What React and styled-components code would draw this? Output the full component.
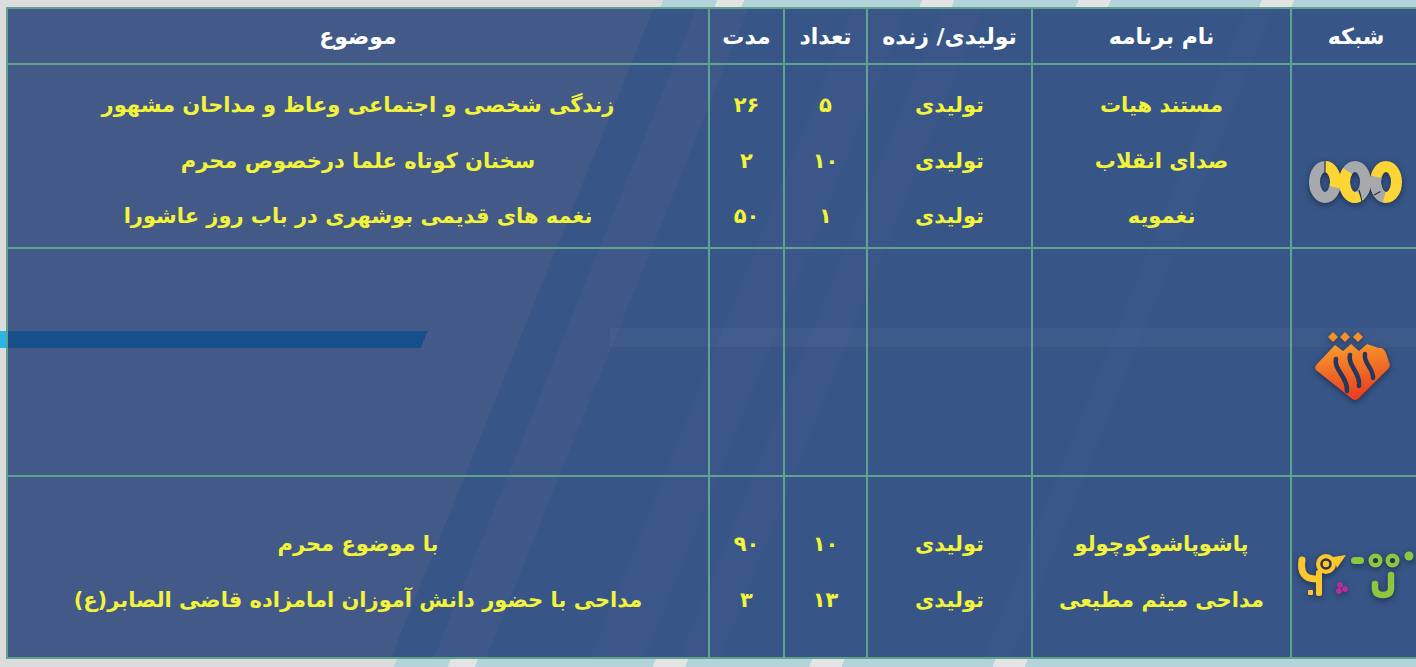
import React from "react";
import styled, { createGlobalStyle } from "styled-components";

const GlobalStyle = createGlobalStyle`
  html, body { margin: 0; padding: 0; overflow: hidden; }
  body { width: 1416px; height: 667px; }
`;

const FONT = `"DejaVu Sans", "Noto Sans", sans-serif`;
const BORDER = "#5fa28e";

const Stage = styled.div`
  width: 1416px;
  height: 667px;
  overflow: hidden;
  box-sizing: border-box;
  padding: 7px 0 0 6px;
  background:
    linear-gradient(#2bb6e4, #2bb6e4) 0 331px / 8px 17px no-repeat,
    linear-gradient(
      112deg,
      #dcdcdc 0 615px,
      #b4d4dc 615px 665px,
      #e4e4e4 665px 690px,
      #b4d4dc 690px 855px,
      #e4e4e4 855px 885px,
      #b4d4dc 885px 1000px,
      #e4e4e4 1000px 1030px,
      #b4d4dc 1030px 1170px,
      #e4e4e4 1170px 1200px,
      #b4d4dc 1200px
    );
`;

const Table = styled.div`
  width: 1416px;
  box-sizing: border-box;
  border-top: 2px solid ${BORDER};
  border-right: 2px solid ${BORDER};
  direction: rtl;
  display: grid;
  grid-template-columns: 130px 259px 165px 83px 75px 702px;
  grid-template-rows: 56px 184px 228px 182px;
  font-family: ${FONT};
  background:
    linear-gradient(112deg, #15508b 0 391px, transparent 391px) 0 322px / 422px 17px no-repeat,
    linear-gradient(rgba(255, 255, 255, 0.03), rgba(255, 255, 255, 0.03)) 604px 319px / 100% 19px no-repeat,
    linear-gradient(
      112deg,
      #435987 0 600px,
      #375586 600px 640px,
      #3e5889 640px 688px,
      #375586 688px 785px,
      #3b578a 785px 835px,
      #375586 835px 868px,
      #3b578a 868px 905px,
      #375586 905px 1150px,
      #3a578a 1150px 1175px,
      #375586 1175px
    );
`;

const Cell = styled.div`
  box-sizing: border-box;
  border-left: 2px solid ${BORDER};
  border-bottom: 2px solid ${BORDER};
  display: flex;
  flex-direction: column;
  align-items: center;
  justify-content: center;
  min-width: 0;
`;

const BodyCell = styled(Cell)`
  padding-top: 11px;
`;

const HeadCell = styled(Cell)`
  color: #ffffff;
  font-weight: 700;
  font-size: 22px;
  padding-top: 1px;
  white-space: nowrap;
`;

const Line = styled.div`
  color: #f3f33c;
  font-weight: 700;
  font-size: 21px;
  line-height: 55.5px;
  height: 55.5px;
  white-space: nowrap;
`;

const LogoCell = styled(Cell)`
  padding-top: ${(p) => p.$shift || 0}px;
  padding-right: ${(p) => p.$right || 0}px;
`;

const LogoSvg = styled.svg`
  display: block;
  filter: drop-shadow(0 2px 3px rgba(10, 20, 40, 0.55));
`;

const RingsLogo = () => (
  <LogoSvg width="96" height="48" viewBox="0 0 96 48">
    <g fill="none" strokeWidth="11">
      <ellipse cx="17" cy="24" rx="10.5" ry="15.5" stroke="#a7a9ac" />
      <ellipse cx="78" cy="24" rx="10.5" ry="15.5" stroke="#fdd535" />
      <ellipse cx="47" cy="24" rx="10.5" ry="15.5" stroke="#a7a9ac" />
      <path d="M39.58 13.04 A10.5 15.5 0 0 0 52.25 37.42" stroke="#fdd535" />
      <path d="M17 8.5 A10.5 15.5 0 0 1 26.87 29.3" stroke="#fdd535" />
      <path d="M76.18 39.26 A10.5 15.5 0 0 1 68.13 18.7" stroke="#a7a9ac" />
    </g>
    <g stroke="#263450" strokeWidth="1.2">
      <line x1="17" y1="3" x2="17" y2="14" />
      <line x1="51" y1="32" x2="54" y2="43" />
      <line x1="66" y1="37" x2="72.5" y2="33.5" />
    </g>
  </LogoSvg>
);

const OfoghLogo = () => (
  <LogoSvg width="80" height="72" viewBox="0 0 80 72">
    <defs>
      <linearGradient id="ofg" x1="0" y1="0" x2="0.2" y2="1">
        <stop offset="0" stopColor="#f9a02c" />
        <stop offset="1" stopColor="#e9401f" />
      </linearGradient>
    </defs>
    <g fill="#f6902a">
      <polygon points="20,1 25,6 20,11 15,6" />
      <polygon points="32,1 37,6 32,11 27,6" />
      <polygon points="45,1 50,6 45,11 40,6" />
    </g>
    <path
      d="M3 39 Q1 36 4 33 L22 14 L30 20 L38 13 L46 20 L54 13 L66 17 Q70 16 73 22 L76 31 Q78 35 75 38 L46 67 Q42 71 38 67 Z"
      fill="url(#ofg)"
    />
    <g fill="none" stroke="#26375f" strokeWidth="4.5" strokeLinecap="round">
      <path d="M23 28 C20 38 35 46 34 60" />
      <path d="M37 24 C34 34 48 42 46 55" />
      <path d="M52 23 C50 32 61 38 60 47" />
    </g>
  </LogoSvg>
);

const PooyaLogo = () => (
  <LogoSvg width="120" height="52" viewBox="0 0 120 52">
    <g fill="#fbc62e">
      <circle cx="30" cy="16" r="10" />
      <polygon points="37,9 50,7 41,20" />
      <rect x="20" y="22" width="6" height="26" rx="2" />
      <rect x="12" y="42" width="5" height="5" rx="1" />
    </g>
    <path d="M6 12 Q3 31 20 31" fill="none" stroke="#fbc62e" strokeWidth="7" strokeLinecap="round" />
    <circle cx="30" cy="16" r="4.5" fill="#fbc62e" stroke="#2a3350" strokeWidth="2.5" />
    <g fill="#b42f9b">
      <circle cx="44" cy="37" r="3" />
      <circle cx="49" cy="41" r="3" />
      <circle cx="43" cy="43" r="3" />
    </g>
    <g fill="#8dc63f">
      <rect x="55" y="9" width="13" height="7" rx="3.5" />
      <circle cx="79.5" cy="12.5" r="7" />
      <circle cx="96.5" cy="12.5" r="7" />
      <circle cx="113" cy="8" r="4.5" />
    </g>
    <g fill="#2a3350">
      <circle cx="79.5" cy="12.5" r="2.6" />
      <circle cx="96.5" cy="12.5" r="2.6" />
    </g>
    <path d="M95 27 L95 40 Q95 47 87 47 Q79 47 79 40 L79 36" fill="none" stroke="#8dc63f" strokeWidth="6.5" strokeLinecap="round" />
  </LogoSvg>
);

const headers = ["شبکه", "نام برنامه", "تولیدی/ زنده", "تعداد", "مدت", "موضوع"];

const groups = [
  {
    logo: <RingsLogo />,
    shift: 52,
    right: 0,
    rows: [
      ["مستند هیات", "تولیدی", "۵", "۲۶", "زندگی شخصی و اجتماعی وعاظ و مداحان مشهور"],
      ["صدای انقلاب", "تولیدی", "۱۰", "۲", "سخنان کوتاه علما درخصوص محرم"],
      ["نغمویه", "تولیدی", "۱", "۵۰", "نغمه های قدیمی بوشهری در باب روز عاشورا"],
    ],
  },
  { logo: <OfoghLogo />, shift: 10, right: 6, rows: [] },
  {
    logo: <PooyaLogo />,
    shift: 14,
    right: 0,
    rows: [
      ["پاشوپاشوکوچولو", "تولیدی", "۱۰", "۹۰", "با موضوع محرم"],
      ["مداحی میثم مطیعی", "تولیدی", "۱۳", "۳", "مداحی با حضور دانش آموزان امامزاده قاضی الصابر(ع)"],
    ],
  },
];

export default function App() {
  return (
    <>
      <GlobalStyle />
      <Stage>
        <Table>
          {headers.map((h) => (
            <HeadCell key={h}>{h}</HeadCell>
          ))}
          {groups.map((g, gi) => (
            <React.Fragment key={gi}>
              <LogoCell $shift={g.shift} $right={g.right}>
                {g.logo}
              </LogoCell>
              {[0, 1, 2, 3, 4].map((ci) => (
                <BodyCell key={ci}>
                  {g.rows.map((r, ri) => (
                    <Line key={ri}>{r[ci]}</Line>
                  ))}
                </BodyCell>
              ))}
            </React.Fragment>
          ))}
        </Table>
      </Stage>
    </>
  );
}
